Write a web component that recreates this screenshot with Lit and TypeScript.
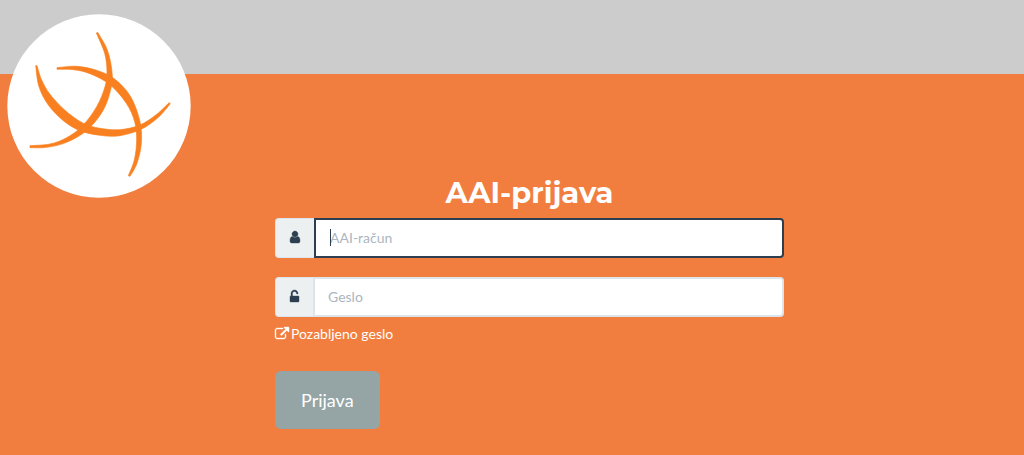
import { LitElement, html, css, svg } from "lit";
import { customElement, state } from "lit/decorators.js";

type Point = [number, number];

// Smooth curve through a list of points (Catmull-Rom converted to cubic Béziers).
const curve = (pts: Point[]): string =>
  pts
    .slice(0, -1)
    .map((p, i) => {
      const before = pts[i - 1] ?? p;
      const next = pts[i + 1];
      const after = pts[i + 2] ?? next;
      const c1 = [p[0] + (next[0] - before[0]) / 6, p[1] + (next[1] - before[1]) / 6];
      const c2 = [next[0] - (after[0] - p[0]) / 6, next[1] - (after[1] - p[1]) / 6];
      return `C${c1.join(" ")} ${c2.join(" ")} ${next.join(" ")}`;
    })
    .join("");

const blade = (outer: Point[], inner: Point[]): string =>
  `M${outer[0].join(" ")}${curve(outer)}L${inner[0].join(" ")}${curve(inner)}Z`;

const BLADES = [
  blade(
    [[293, 97], [322, 150], [336, 215], [333, 265], [310, 330], [262, 390], [200, 427], [140, 442], [90, 443]],
    [[90, 437], [150, 432], [200, 413], [247, 378], [290, 320], [315, 260], [321, 215], [314, 160], [289, 99]],
  ),
  blade(
    [[171, 203], [230, 199], [290, 211], [344, 237], [392, 290], [420, 365], [424, 430], [411, 490], [390, 529]],
    [[385, 527], [403, 480], [410, 420], [404, 365], [379, 310], [330, 254], [270, 221], [220, 209], [171, 208]],
  ),
  blade(
    [[107, 197], [117, 260], [145, 315], [190, 362], [240, 392], [300, 406], [360, 407], [425, 387], [475, 352], [511, 311]],
    [[507, 308], [470, 343], [420, 375], [360, 389], [300, 385], [250, 370], [195, 331], [150, 283], [125, 240], [111, 197]],
  ),
];

const USER =
  "M1280 1399q0 109-62.5 187t-150.5 78h-854q-88 0-150.5-78T0 1399q0-85 8.5-160.5t31.5-152 58.5-131 94-89T327 832q131 128 313 128t313-128q76 0 134.5 34.5t94 89 58.5 131 31.5 152 8.5 160.5zM1024 512q0 159-112.5 271.5T640 896 368.5 783.5 256 512t112.5-271.5T640 128t271.5 112.5T1024 512z";
const UNLOCK =
  "M1056 896q40 0 68 28t28 68v576q0 40-28 68t-68 28H96q-40 0-68-28t-28-68V992q0-40 28-68t68-28h32V576q0-185 131.500-316.500T576 128t316.500 131.500T1024 576q0 26-19 45t-45 19h-64q-26 0-45-19t-19-45q0-106-75-181t-181-75-181 75-75 181v320h672z";
const EXTERNAL =
  "M1408 928v320q0 119-84.500 203.500T1120 1536H288q-119 0-203.500-84.500T0 1248V416q0-119 84.500-203.500T288 128h704q14 0 23 9t9 23v64q0 14-9 23t-23 9H288q-66 0-113 47t-47 113v832q0 66 47 113t113 47h832q66 0 113-47t47-113V928q0-14 9-23t23-9h64q14 0 23 9t9 23zm384-864v512q0 26-19 45t-45 19-45-19l-176-176-652 652q-10 10-23 10t-23-10L695 983q-10-10-10-23t10-23l652-652-176-176q-19-19-19-45t19-45 45-19h512q26 0 45 19t19 45z";

const icon = (width: number, d: string) => html`
  <svg class="icon" viewBox="0 0 ${width} 1792" aria-hidden="true"><path d=${d}></path></svg>
`;

@customElement("app-root")
export class AppRoot extends LitElement {
  static styles = css`
    :host {
      display: block;
      min-height: 100vh;
      background: #f17e3e;
      color: #fff;
      font: 14px/20px Lato, "Open Sans", sans-serif;
    }
    *, *::before {
      box-sizing: border-box;
    }
    .top {
      position: relative;
      height: 74px;
      background: #ccc;
    }
    .logo {
      position: absolute;
      top: 14px;
      left: 7px;
      width: 184px;
      height: 184px;
    }
    .blade {
      fill: #f98020;
      stroke: #f98020;
      stroke-width: 2;
      stroke-linejoin: round;
    }
    .page {
      display: grid;
      grid-template-columns: 275fr 509fr 240fr;
      padding: 100px 0 24px;
    }
    .login {
      grid-column: 2;
      display: flex;
      flex-direction: column;
      align-items: flex-start;
    }
    .title {
      align-self: center;
      margin: 0;
      padding: 1px 0 7px;
      font: 700 29px/36px Montserrat, Inter, sans-serif;
    }
    .field {
      display: flex;
      width: 100%;
      height: 40px;
      margin-bottom: 19px;
    }
    .field.last {
      margin-bottom: 7px;
    }
    .addon {
      display: flex;
      align-items: center;
      justify-content: center;
      width: 38px;
      padding-bottom: 2px;
      border: 1px solid #dce4ec;
      border-right: 0;
      border-radius: 4px 0 0 4px;
      background: #ecf0f1;
      color: #2c3e50;
    }
    .active .addon {
      width: 39px;
    }
    .icon {
      height: 14px;
      fill: currentColor;
      stroke: currentColor;
      stroke-width: 50;
      overflow: visible;
    }
    .box {
      position: relative;
      flex: 1;
      display: flex;
    }
    .input {
      flex: 1;
      min-width: 0;
      margin: 0;
      padding: 0 13px;
      border: 2px solid #dce4ec;
      border-radius: 0 4px 4px 0;
      outline: 0;
      background: #fff;
      color: #2c3e50;
      font: inherit;
      caret-color: transparent;
    }
    .active .input {
      padding: 0 14px;
      border-color: #2c3e50;
    }
    .input::placeholder {
      color: #acb6c0;
      opacity: 1;
    }
    .caret {
      position: absolute;
      top: 11px;
      left: 16px;
      width: 1px;
      height: 17px;
      background: #2c3e50;
    }
    .forgot {
      display: flex;
      align-items: center;
      gap: 2px;
      color: #fff;
      text-decoration: none;
    }
    .submit {
      margin: 27px 0 0;
      padding: 16px 26px;
      border: 0;
      border-radius: 6px;
      background: #95a5a6;
      color: #fff;
      font: 18px/26px Lato, "Open Sans", sans-serif;
      cursor: pointer;
    }
  `;

  @state() private account = "";

  render() {
    return html`
      <header class="top">
        <svg class="logo" viewBox="21 42 552 552" role="img" aria-label="AAI">
          <circle cx="297" cy="318" r="275" fill="#fff"></circle>
          ${BLADES.map((d) => svg`<path class="blade" d=${d}></path>`)}
        </svg>
      </header>
      <main class="page">
        <form class="login" @submit=${(e: Event) => e.preventDefault()}>
          <h1 class="title">AAI-prijava</h1>
          <div class="field active">
            <label class="addon" for="account">${icon(1280, USER)}</label>
            <div class="box">
              <input
                class="input"
                id="account"
                type="text"
                placeholder="AAI-račun"
                aria-label="AAI-račun"
                .value=${this.account}
                @input=${(e: Event) => (this.account = (e.target as HTMLInputElement).value)}
              />
              ${this.account ? "" : html`<span class="caret"></span>`}
            </div>
          </div>
          <div class="field last">
            <label class="addon" for="password">${icon(1152, UNLOCK)}</label>
            <div class="box">
              <input class="input" id="password" type="password" placeholder="Geslo" aria-label="Geslo" />
            </div>
          </div>
          <a class="forgot" href="#">${icon(1792, EXTERNAL)}<span>Pozabljeno geslo</span></a>
          <button class="submit" type="submit">Prijava</button>
        </form>
      </main>
    `;
  }
}
